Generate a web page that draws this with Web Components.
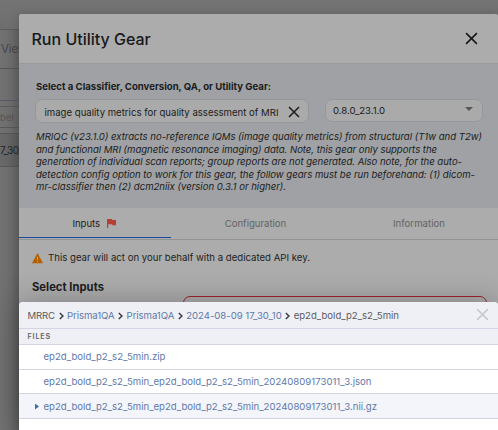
<!DOCTYPE html>
<html lang="en"><head><meta charset="utf-8"><title>Run Utility Gear</title>
<style>
html,body{margin:0;height:100%;overflow:hidden;font-family:Inter,"Liberation Sans",sans-serif}
</style></head><body>
<gear-page></gear-page>
<script>
const define=(name,html,setup)=>{
  const t=document.createElement('template');t.innerHTML=html;
  customElements.define(name,class extends HTMLElement{
    constructor(){super();this.attachShadow({mode:'open'}).append(t.content.cloneNode(true));}
    connectedCallback(){setup&&setup(this,this.shadowRoot);}
  });
};

/* One line of text whose tracking is adjusted to fill a given width. */
define('fit-line',`<style>:host{display:block;white-space:pre;flex:none}span{display:inline-block}</style><span><slot></slot></span>`,(el,r)=>{
  const w=+el.getAttribute('w'),s=r.querySelector('span');
  el.style.width=w+'px';
  const n=el.textContent.length;
  s.style.letterSpacing=((w-s.getBoundingClientRect().width)/n)+'px';
});

define('close-icon',`<style>:host{display:block;flex:none}svg{display:block;width:100%;height:100%}</style>
<svg viewBox="0 0 12 12"><path d="M1 1L11 11M11 1L1 11" fill="none" stroke="currentColor" stroke-width="1.5"/></svg>`);

define('crumb-arrow',`<style>:host{display:block;flex:none;width:5px;height:8px;color:#3e4248}svg{display:block}</style>
<svg width="5" height="8" viewBox="0 0 5 8"><path d="M.8 1L3.9 4L.8 7" fill="none" stroke="currentColor" stroke-width="1.6"/></svg>`);

define('back-page',`<style>
:host{display:flex;flex-direction:column;height:430px;color:#3a3c42;background:linear-gradient(90deg,#727272,#6c6c6c 10px,#626262 19px);box-sizing:border-box}
.top{height:29px;background:linear-gradient(#747474,#6e6e6e);border-bottom:1px solid #5c5c5e}
.nav{height:38px;border-bottom:1px solid #535457;display:flex;align-items:center;padding-left:1px;font-size:11.5px;color:#45464b}
.gap{height:31px;border-bottom:1px solid #555866}
.g2{height:5px;border-bottom:1px solid #58595c}
.field{height:20px;border-bottom:1px solid #555659;display:flex;align-items:center;font-size:9.5px;color:#545454}
.row{height:32px;margin-top:5px;background:#00000014;border-top:1px solid #555659;border-bottom:1px solid #555659;display:flex;align-items:center;font-size:10px;color:#222428}
</style><div class="top"></div><div class="nav"><fit-line w="26">View</fit-line></div><div class="gap"></div><div class="g2"></div><div class="field"><fit-line w="14">bel</fit-line></div><div class="row"><fit-line w="22">7_30_</fit-line></div>`);

define('dialog-header',`<style>
:host{display:flex;align-items:center;justify-content:space-between;height:50px;box-sizing:border-box;padding:0 20.5px 1px 12.5px;border-bottom:1px solid #989a9e;background:#acacac;color:#17181b}
fit-line{font-size:16px;font-weight:500;line-height:20px;margin-top:2px}
close-icon{width:13px;height:13px;margin-top:1px}
</style><fit-line w="119.3">Run Utility Gear</fit-line><close-icon></close-icon>`);

define('gear-chooser',`<style>
:host{display:block;height:144px;box-sizing:border-box;padding:17px 15px 0 17px;background:#9fa1a4;color:#1b1c20}
.label{font-size:9.6px;font-weight:700;line-height:12px}
.fields{display:flex;justify-content:space-between;align-items:flex-start;margin:6px 0 8px -1px}
.box{box-sizing:border-box;border:1px solid #95979b;border-radius:7px;background:#aaa;display:flex;align-items:center;justify-content:space-between;font-size:9.6px;height:24px}
.query{width:274px;padding:3px 8px 0 8.5px}.query close-icon{width:12px;height:12px;margin-top:-2px}
.version{width:158px;height:23px;padding:0 9px 0 7px}
.caret{border:4px solid transparent;border-top-color:#55565a;border-bottom:0;margin-top:-4px}
.desc{font-size:9.6px;line-height:12.5px;font-style:italic}
</style>
<fit-line class="label" w="235">Select a Classifier, Conversion, QA, or Utility Gear:</fit-line>
<div class="fields"><div class="box query"><fit-line w="234">image quality metrics for quality assessment of MRI</fit-line><close-icon></close-icon></div>
<div class="box version"><fit-line w="52">0.8.0_23.1.0</fit-line><div class="caret"></div></div></div>
<div class="desc"><fit-line w="446">MRIQC (v23.1.0) extracts no-reference IQMs (image quality metrics) from structural (T1w and T2w)</fit-line><fit-line w="401">and functional MRI (magnetic resonance imaging) data. Note, this gear only supports the</fit-line><fit-line w="426">generation of individual scan reports; group reports are not generated. Also note, for the auto-</fit-line><fit-line w="439">detection config option to work for this gear, the follow gears must be run beforehand: (1) dicom-</fit-line><fit-line w="250">mr-classifier then (2) dcm2niix (version 0.3.1 or higher).</fit-line></div>`);

define('dialog-tabs',`<style>
:host{display:flex;height:32px;box-sizing:border-box;border-bottom:1px solid #929395;font-size:9.6px;color:#626367}
div{box-sizing:border-box;display:flex;align-items:center;height:30px;padding-top:2px}
.on{width:152px;padding-left:53.5px;gap:7px;border-bottom:1px solid #164a9c;color:#1b1c20}
.mid,.end{justify-content:center;padding-bottom:1px}
.mid{width:169px}.end{width:158px}
svg{display:block}
</style><div class="on"><fit-line w="27.5">Inputs</fit-line><svg width="9" height="9" viewBox="0 0 9 9"><path d="M0 0H5L5.4 1H9V6.2H5.5L5 5.2H1.2V9H0Z" fill="#b43f33"/></svg></div><div class="mid"><fit-line w="61.5">Configuration</fit-line></div><div class="end"><fit-line w="52">Information</fit-line></div>`);

define('dialog-body',`<style>
:host{display:block;padding:11px 11px 0 13px;color:#1d1e21}
.note{display:flex;align-items:center;gap:5px;font-size:9.6px;line-height:14px}
svg{display:block;margin-top:1px}
h2{font-size:11.2px;line-height:14px;font-weight:700;margin:15px 0 2px}
.drop{height:40px;margin-left:151px;border:1px solid #9e2529;border-radius:7px;box-sizing:border-box}
</style><div class="note"><svg width="11" height="11" viewBox="0 0 11 11"><path d="M5.5 0L11 10.3H0Z" fill="#b66100"/><path d="M5.5 3.8V6.8M5.5 7.8V9" stroke="#c9a070" stroke-width="1"/></svg><fit-line w="262">This gear will act on your behalf with a dedicated API key.</fit-line></div><h2><fit-line w="72">Select Inputs</fit-line></h2><div class="drop"></div>`);

define('gear-dialog',`<style>:host{display:block;background:#acacac;border-radius:3px 3px 0 0;overflow:hidden;box-shadow:0 2px 12px #0003}</style>
<dialog-header></dialog-header><gear-chooser></gear-chooser><dialog-tabs></dialog-tabs><dialog-body></dialog-body>`);

define('file-row',`<style>
:host{display:flex;align-items:center;box-sizing:border-box;height:25px;padding:0 0 1px 15px;gap:5.5px;border-bottom:1px solid #d3d5e5;background:#fff;color:#6078ab;font-size:9.6px}
:host([short]){height:24px;padding-bottom:0}:host([folder]){background:#f4f5fa;padding:1px 0 0 15px}
i{width:4px;height:6px;flex:none;margin-left:1px;margin-right:-1px}:host([folder]) i{background:#486da5;clip-path:polygon(0 0,100% 50%,0 100%)}
</style><i></i><slot></slot>`);

define('file-picker',`<style>
:host{display:block;background:#fff;border-radius:4px 4px 0 0;overflow:hidden;box-shadow:0 0 30px #0004}
nav{display:flex;align-items:center;height:27px;box-sizing:border-box;padding:1px 9px 0 8.5px;gap:3.5px;background:#eff0f5;border-bottom:1px solid #d3d5e5;font-size:9.6px;color:#5a5b5f}
a{color:#6078ab}
close-icon{width:13px;height:13px;margin:-2px 0 0 auto;color:#c9cacc}
.head{display:flex;align-items:center;height:16px;box-sizing:border-box;padding-left:8.5px;background:#eff0f5;border-bottom:1px solid #d3d5e5;font-size:7.2px;font-weight:600;color:#626367}
</style><nav><fit-line w="27.5">MRRC</fit-line><crumb-arrow></crumb-arrow><a><fit-line w="47.6">Prisma1QA</fit-line></a><crumb-arrow></crumb-arrow><a><fit-line w="47.6">Prisma1QA</fit-line></a><crumb-arrow></crumb-arrow><a><fit-line w="95.5">2024-08-09 17_30_10</fit-line></a><crumb-arrow></crumb-arrow><fit-line w="105.3">ep2d_bold_p2_s2_5min</fit-line><close-icon></close-icon></nav>
<div class="head"><fit-line w="23.5">FILES</fit-line></div>
<file-row><fit-line w="122">ep2d_bold_p2_s2_5min.zip</fit-line></file-row>
<file-row short><fit-line w="328">ep2d_bold_p2_s2_5min_ep2d_bold_p2_s2_5min_20240809173011_3.json</fit-line></file-row>
<file-row folder><fit-line w="333.5">ep2d_bold_p2_s2_5min_ep2d_bold_p2_s2_5min_20240809173011_3.nii.gz</fit-line></file-row>`);

define('gear-page',`<style>
:host{display:block;position:relative;width:498px;height:430px;overflow:hidden}
gear-dialog{position:absolute;left:19px;top:14px;width:479px;height:416px}
file-picker{position:absolute;left:19px;top:302px;width:479px;height:128px}
</style><back-page></back-page><gear-dialog></gear-dialog><file-picker></file-picker>`);
</script></body></html>
